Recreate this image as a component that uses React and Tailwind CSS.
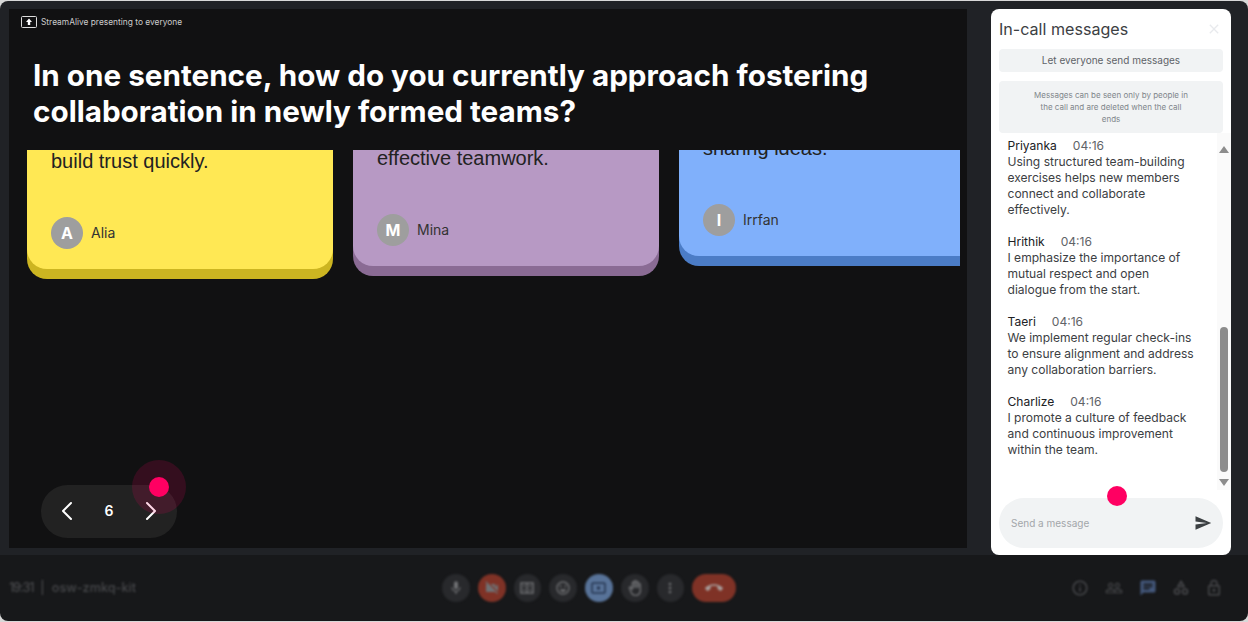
import { MdMic, MdVideocamOff, MdOutlineEmojiEmotions, MdOutlineBackHand, MdMoreVert, MdCallEnd, MdInfoOutline, MdPeopleOutline, MdChat, MdOutlineLock, MdSend, MdClose } from "react-icons/md";
import { ChevronLeft, ChevronRight } from "lucide-react";

const cards = [
  { text: "build trust quickly.", name: "Alia", h: "h-[129px]", face: "bg-[#ffe854]", edge: "bg-[#ccb521]" },
  { text: "effective teamwork.", name: "Mina", h: "h-[126px]", face: "bg-[#b799c4]", edge: "bg-[#8a6b94]" },
  { text: "sharing ideas.", name: "Irrfan", h: "h-[116px]", face: "bg-[#80b0fb]", edge: "bg-[#4b7cc6]" },
];

const messages = [
  { name: "Priyanka", text: "Using structured team-building exercises helps new members connect and collaborate effectively." },
  { name: "Hrithik", text: "I emphasize the importance of mutual respect and open dialogue from the start." },
  { name: "Taeri", text: "We implement regular check-ins to ensure alignment and address any collaboration barriers." },
  { name: "Charlize", text: "I promote a culture of feedback and continuous improvement within the team." },
];

const Card = ({ card }) => (
  <div className={`${card.h} ${card.edge} w-[306px] shrink-0 flex flex-col pb-[10px] rounded-b-[20px]`}>
    <div className={`${card.face} flex-1 min-h-0 overflow-hidden flex flex-col justify-end px-6 pb-5 rounded-b-[20px]`}>
      <p className="font-['Liberation_Sans',sans-serif] text-[20px] leading-6 text-[#222]">{card.text}</p>
      <div className="flex items-center gap-2 mt-[44px]">
        <div className="w-8 h-8 rounded-full bg-[#9e9e9e] flex items-center justify-center text-white font-bold text-base">{card.name[0]}</div>
        <span className="text-sm text-[#333]">{card.name}</span>
      </div>
    </div>
  </div>
);

const Stage = () => (
  <div className="relative w-[958px] h-[539px] bg-[#111112] flex flex-col shrink-0">
    <div className="h-[141px] shrink-0 pl-3 pt-[7px]">
      <div className="flex items-center gap-1 h-3">
        <svg width="16" height="12" viewBox="0 0 16 12" fill="none">
          <rect x="0.5" y="0.5" width="15" height="11" rx="1" stroke="#ddd" />
          <path d="M8 2.5L11 6H9.2V9H6.8V6H5z" fill="#fff" />
        </svg>
        <span className="text-[8.4px] text-[#ccc]">StreamAlive presenting to everyone</span>
      </div>
      <h1 className="ml-3 mt-[29px] text-[29.67px] leading-9 font-bold text-white">
        In one sentence, how do you currently approach fostering<br />collaboration in newly formed teams?
      </h1>
    </div>
    <div className="flex items-start gap-5 pl-[18px] mr-[7px] overflow-hidden">
      {cards.map((c) => <Card key={c.name} card={c} />)}
    </div>
    <div className="mt-auto mb-[10px] ml-8 w-[136px] h-[53px] rounded-full bg-[#222] flex items-center justify-between px-[10px] pb-[1px] text-white">
      <ChevronLeft size={32} strokeWidth={1.5} />
      <span className="text-sm font-semibold">6</span>
      <ChevronRight size={32} strokeWidth={1.5} />
    </div>
    <div className="absolute left-[123px] top-[451px] w-[54px] h-[54px] rounded-full bg-[#ff0062]/15 flex items-center justify-center">
      <div className="w-5 h-5 rounded-full bg-[#ff0062]" />
    </div>
  </div>
);

const Panel = () => (
  <div className="relative w-[240px] h-[546px] bg-white rounded-lg ml-6 flex flex-col shrink-0 overflow-hidden">
    <div className="flex items-center justify-between h-10 px-2">
      <span className="text-[16.1px] text-[#3c4043]">In-call messages</span>
      <MdClose className="text-[#e8eaed] text-base mr-[1px]" />
    </div>
    <div className="mx-2 h-[23px] rounded bg-[#f1f3f4] flex items-center justify-center text-[10px] text-[#5f6368]">Let everyone send messages</div>
    <div className="mx-2 mt-[9px] h-[52px] rounded bg-[#f1f3f4] flex items-center justify-center px-8 text-center text-[8px] leading-3 text-[#80868b]">
      Messages can be seen only by people in the call and are deleted when the call ends
    </div>
    <div className="flex h-[357px]">
      <div className="flex-1 pl-[16.5px] pr-[20px] pt-[5px] flex flex-col gap-4">
        {messages.map((m) => (
          <div key={m.name} className="text-[12.06px] leading-4">
            <div className="flex gap-4">
              <span className="text-[#202124]">{m.name}</span>
              <span className="text-[#5f6368]">04:16</span>
            </div>
            <p className="text-[#3c4043]">{m.text}</p>
          </div>
        ))}
      </div>
      <div className="w-[14px] bg-[#fafafa] flex flex-col items-center pt-[13px]">
        <svg width="10" height="7" viewBox="0 0 10 7"><path d="M5 0L10 7H0z" fill="#8c8c8c" /></svg>
        <div className="w-2 h-[145px] mt-[174px] rounded bg-[#8c8c8c]" />
        <svg className="mt-[7px]" width="10" height="7" viewBox="0 0 10 7"><path d="M0 0H10L5 7z" fill="#8c8c8c" /></svg>
      </div>
    </div>
    <div className="mx-2 mt-2 h-[50px] rounded-[25px] bg-[#f1f3f4] flex items-center justify-between pl-3 pr-[11px]">
      <span className="text-[10px] text-[#a3a6aa]">Send a message</span>
      <MdSend className="text-[#3c4043] text-[18px]" />
    </div>
    <div className="absolute left-[116px] top-[477px] w-5 h-5 rounded-full bg-[#ff0062]" />
  </div>
);

const RoundBtn = ({ className = "bg-[#28292c]", children }) => (
  <div className={`${className} w-7 h-7 rounded-full flex items-center justify-center text-[#6f7073] text-base`}>{children}</div>
);

const BottomBar = () => (
  <div className="h-[66px] bg-[#17181a] rounded-b-lg overflow-hidden">
    <div className="h-full grid grid-cols-[433px_294px_1fr] items-center pl-[9px] pr-[25px] text-[#47484b] blur-[1.2px]">
      <div className="text-[12.7px] font-medium flex gap-[7px]">
        <span className="tracking-[-1.2px]">19:31</span>
        <span>|</span>
        <span>osw-zmkq-kit</span>
      </div>
      <div className="flex items-center gap-2">
        <RoundBtn><MdMic /></RoundBtn>
        <RoundBtn className="bg-[#7f3226]"><MdVideocamOff /></RoundBtn>
        <RoundBtn>
          <svg width="14" height="12" viewBox="0 0 14 12" fill="none" stroke="currentColor" strokeWidth="1.5"><rect x="1" y="1" width="12" height="10" /><path d="M7 1v10M3 4h2M3 8h2M9 4h2M9 8h2" /></svg>
        </RoundBtn>
        <RoundBtn><MdOutlineEmojiEmotions /></RoundBtn>
        <RoundBtn className="bg-[#587399]">
          <svg width="15" height="12" viewBox="0 0 15 12" fill="none" stroke="#24344f" strokeWidth="1.5"><rect x="1" y="1" width="13" height="10" rx="1" /><rect x="6" y="4.5" width="3" height="3" fill="#24344f" stroke="none" /></svg>
        </RoundBtn>
        <RoundBtn><MdOutlineBackHand /></RoundBtn>
        <RoundBtn><MdMoreVert /></RoundBtn>
        <div className="w-11 h-7 rounded-full bg-[#7f3226] flex items-center justify-center text-[#a89d9b] text-lg"><MdCallEnd /></div>
      </div>
      <div className="justify-self-end w-[152px] flex items-center justify-between text-lg">
        <MdInfoOutline />
        <MdPeopleOutline />
        <MdChat className="text-[#44587c]" />
        <svg width="16" height="16" viewBox="0 0 16 16" fill="none" stroke="currentColor" strokeWidth="1.6"><path d="M8 1.5L11 6.5H5z" /><circle cx="4" cy="11.5" r="2.5" /><circle cx="12" cy="11.5" r="2.5" /></svg>
        <MdOutlineLock />
      </div>
    </div>
  </div>
);

const App = () => {
  return (
    <div className="w-[1248px] h-[622px] bg-[#d8d8d8] pb-[1px] font-['Inter',sans-serif] overflow-hidden">
      <div className="h-full pt-[1px] flex flex-col">
        <div className="h-[554px] shrink-0 bg-[#202226] rounded-t-lg flex items-start pl-[9px] pt-2 overflow-hidden">
          <Stage />
          <Panel />
        </div>
        <BottomBar />
      </div>
    </div>
  );
};

export default App;
